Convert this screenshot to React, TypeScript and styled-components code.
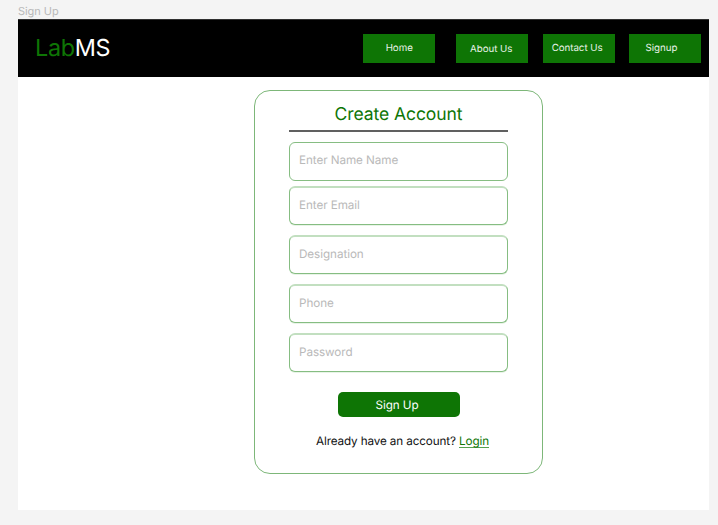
import React from "react";
import styled, { createGlobalStyle } from "styled-components";

const GlobalStyle = createGlobalStyle`
  *, *::before, *::after { box-sizing: border-box; }
  body {
    margin: 0;
    background: #f4f4f4;
    font-family: Inter, "Liberation Sans", sans-serif;
    text-rendering: geometricPrecision;
  }
`;

const Canvas = styled.main`
  width: 718px;
  height: 525px;
  padding: 4px 9px 0 18px;
  overflow: hidden;
`;

const FrameLabel = styled.div`
  height: 15px;
  font-size: 11px;
  line-height: 15px;
  color: #b9b9b9;
  letter-spacing: -0.05px;
`;

const Frame = styled.div`
  height: 491px;
  background: #fff;
`;

const Header = styled.header`
  display: flex;
  justify-content: space-between;
  height: 58px;
  padding: 14px 8px 0 17px;
  background: #000;
  border-top: 1px solid #303030;
`;

const Logo = styled.div`
  height: 28px;
  font-size: 23.4px;
  line-height: 28px;
  letter-spacing: -0.35px;
  color: #fff;
  white-space: nowrap;
`;

const LogoAccent = styled.span`
  color: #0e7505;
`;

const Nav = styled.nav`
  display: grid;
  grid-template-columns: 72px 72px 72px 72px;
  column-gap: 14.4px;
`;

const NavButton = styled.a<{ $shift?: number; $drop?: number }>`
  height: 29px;
  padding-right: ${(p) => p.$shift ?? 0}px;
  padding-top: ${(p) => p.$drop ?? 0}px;
  background: #0e7505;
  color: #e6f1e5;
  font-size: 9.75px;
  line-height: 29px;
  letter-spacing: -0.04px;
  text-align: center;
  white-space: nowrap;

  &:first-child { margin-left: -6.6px; margin-right: 6.6px; }
`;

const Card = styled.form`
  display: flex;
  flex-direction: column;
  align-items: center;
  width: 289px;
  height: 384px;
  margin: 13px 0 0 236px;
  padding-top: 12px;
  border: 1px solid #7db779;
  border-radius: 16px;
`;

const Title = styled.h1`
  width: 219px;
  height: 29px;
  margin: 0;
  border-bottom: 2px solid #606060;
  color: #0e7505;
  font-size: 17.55px;
  font-weight: 400;
  line-height: 24px;
  letter-spacing: -0.1px;
  text-align: center;
  white-space: nowrap;
`;

const Field = styled.input<{ $gap: number; $soft?: boolean }>`
  width: 219px;
  height: 39px;
  flex: none;
  margin: ${(p) => p.$gap}px 0 0;
  padding: 0 9px ${(p) => (p.$soft ? 2 : 3)}px;
  border: 1px solid #86bd82;
  border-top: ${(p) => (p.$soft ? "2px solid #c2dfc0" : "1px solid #86bd82")};
  border-radius: 6px;
  box-shadow: ${(p) => (p.$soft ? "0 1px 0 #e8f4e7" : "none")};
  background: #fff;
  font: 400 11.7px/16px Inter, "Liberation Sans", sans-serif;
  letter-spacing: -0.07px;
  text-rendering: geometricPrecision;
  outline: none;

  &::placeholder { color: #b9b9b9; opacity: 1; }
`;

const Submit = styled.button`
  width: 122px;
  height: 25px;
  flex: none;
  margin: 20px 0 0;
  padding: 1px 3px 0 0;
  border: 0;
  border-radius: 5px;
  background: #0e7505;
  color: #fff;
  font: 400 11.7px/24px Inter, "Liberation Sans", sans-serif;
  letter-spacing: -0.07px;
  text-rendering: geometricPrecision;
`;

const Prompt = styled.p`
  margin: 16px 0 0 8px;
  color: #111;
  font-size: 11.7px;
  line-height: 16px;
  letter-spacing: -0.12px;
  white-space: nowrap;
`;

const LoginLink = styled.a`
  display: inline-block;
  height: 15px;
  border-bottom: 1px solid #55a04f;
  color: #0e7505;
`;

const links = [
  { label: "Home", shift: 0 },
  { label: "About Us", shift: 2, drop: 1 },
  { label: "Contact Us", shift: 3 },
  { label: "Signup", shift: 7 },
];

const fields = [
  { label: "Enter Name Name", type: "text", gap: 10 },
  { label: "Enter Email", type: "email", gap: 5, soft: true },
  { label: "Designation", type: "text", gap: 10, soft: true },
  { label: "Phone", type: "tel", gap: 10, soft: true },
  { label: "Password", type: "password", gap: 10, soft: true },
];

export default function App() {
  return (
    <Canvas>
      <GlobalStyle />
      <FrameLabel>Sign Up</FrameLabel>
      <Frame>
        <Header>
          <Logo><LogoAccent>Lab</LogoAccent>MS</Logo>
          <Nav>
            {links.map((l) => (
              <NavButton key={l.label} $shift={l.shift} $drop={l.drop}>{l.label}</NavButton>
            ))}
          </Nav>
        </Header>
        <Card>
          <Title>Create Account</Title>
          {fields.map((f) => (
            <Field key={f.label} type={f.type} placeholder={f.label} $gap={f.gap} $soft={f.soft} />
          ))}
          <Submit type="button">Sign Up</Submit>
          <Prompt>Already have an account? <LoginLink>Login</LoginLink></Prompt>
        </Card>
      </Frame>
    </Canvas>
  );
}
